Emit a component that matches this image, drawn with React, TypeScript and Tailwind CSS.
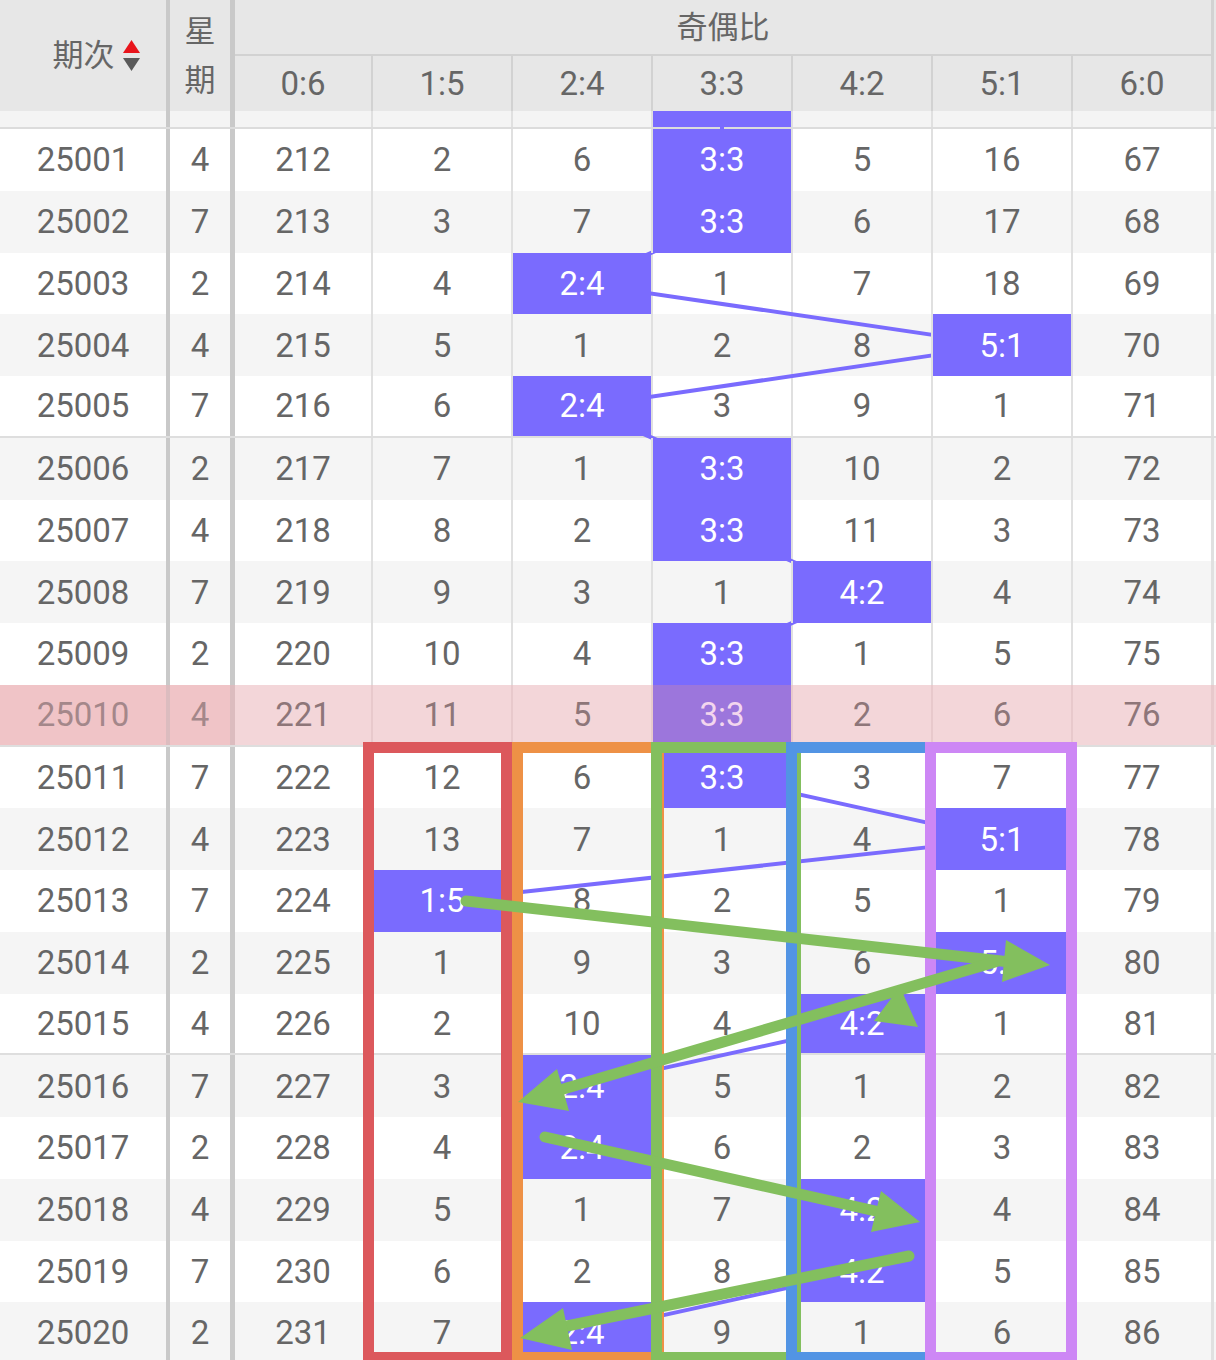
import React from 'react';

const ratios = ['0:6', '1:5', '2:4', '3:3', '4:2', '5:1', '6:0'];

// 0 = hit this draw (highlighted cell), otherwise the miss count
const rows = [
  { id: 25001, week: 4, vals: [212, 2, 6, 0, 5, 16, 67] },
  { id: 25002, week: 7, vals: [213, 3, 7, 0, 6, 17, 68] },
  { id: 25003, week: 2, vals: [214, 4, 0, 1, 7, 18, 69] },
  { id: 25004, week: 4, vals: [215, 5, 1, 2, 8, 0, 70] },
  { id: 25005, week: 7, vals: [216, 6, 0, 3, 9, 1, 71] },
  { id: 25006, week: 2, vals: [217, 7, 1, 0, 10, 2, 72] },
  { id: 25007, week: 4, vals: [218, 8, 2, 0, 11, 3, 73] },
  { id: 25008, week: 7, vals: [219, 9, 3, 1, 0, 4, 74] },
  { id: 25009, week: 2, vals: [220, 10, 4, 0, 1, 5, 75] },
  { id: 25010, week: 4, vals: [221, 11, 5, 0, 2, 6, 76] },
  { id: 25011, week: 7, vals: [222, 12, 6, 0, 3, 7, 77] },
  { id: 25012, week: 4, vals: [223, 13, 7, 1, 4, 0, 78] },
  { id: 25013, week: 7, vals: [224, 0, 8, 2, 5, 1, 79] },
  { id: 25014, week: 2, vals: [225, 1, 9, 3, 6, 0, 80] },
  { id: 25015, week: 4, vals: [226, 2, 10, 4, 0, 1, 81] },
  { id: 25016, week: 7, vals: [227, 3, 0, 5, 1, 2, 82] },
  { id: 25017, week: 2, vals: [228, 4, 0, 6, 2, 3, 83] },
  { id: 25018, week: 4, vals: [229, 5, 1, 7, 0, 4, 84] },
  { id: 25019, week: 7, vals: [230, 6, 2, 8, 0, 5, 85] },
  { id: 25020, week: 2, vals: [231, 7, 0, 9, 1, 6, 86] },
];

const HEADER_H = 111;
const STRIP_H = 18;
const ROW_H = 61.75;

const colX = (j: number) => (j === 0 ? 303 : 442 + 140 * (j - 1));
const rowY = (i: number) => (i < 0 ? HEADER_H + 9 : HEADER_H + STRIP_H + i * ROW_H + ROW_H / 2);

const ratioCol = (j: number, pink = false) => {
  const line = pink ? 'border-[#e8c9cc]' : 'border-[#e0e0e0]';
  if (j === 0) return 'w-[136px]';
  if (j === 6) return `w-[143px] border-l-2 border-r-[3px] ${line}`;
  return `w-[140px] border-l-2 ${line}`;
};

const SortArrows = () => (
  <svg width="17" height="32" viewBox="0 0 17 32" className="ml-2">
    <polygon points="8.5,0 17,13 0,13" fill="#e8141b" />
    <polygon points="0,18 17,18 8.5,31" fill="#5a5a5a" />
  </svg>
);

const Header = () => (
  <div className="flex h-[111px] bg-[#e7e7e7] text-[#666]">
    <div className="w-[170px] border-r-4 border-[#c9c9c9] flex items-center justify-center pl-[26px]">
      <span className="text-[31px] leading-none">期次</span>
      <SortArrows />
    </div>
    <div className="w-[65px] border-r-[5px] border-[#c9c9c9] flex flex-col items-center justify-center text-[31px] leading-[49px]">
      <span>星</span>
      <span>期</span>
    </div>
    <div className="flex flex-col">
      <div className="h-[56px] border-b-2 border-r-[3px] border-[#d2d2d2] flex items-center justify-center text-[31px]">
        奇偶比
      </div>
      <div className="flex h-[55px]">
        {ratios.map((r, j) => (
          <div
            key={r}
            className={`${j === 0 ? 'w-[136px]' : j === 6 ? 'w-[143px] border-l-2 border-r-[3px]' : 'w-[140px] border-l-2'} border-[#d2d2d2] flex items-center justify-center text-[33px]`}
          >
            {r}
          </div>
        ))}
      </div>
    </div>
  </div>
);

// leftover bit of the previous (scrolled) row
const Strip = () => (
  <div className="flex h-[18px] bg-[#f4f4f4] border-b-2 border-[#dcdcdc]">
    <div className="w-[170px] border-r-4 border-[#c9c9c9]" />
    <div className="w-[65px] border-r-[5px] border-[#c9c9c9]" />
    {ratios.map((r, j) => (
      <div key={r} className={`${ratioCol(j)} ${j === 3 ? 'relative z-20 bg-[#7a6bfe]' : ''}`} />
    ))}
  </div>
);

const Row = ({ row, i }: { row: (typeof rows)[number]; i: number }) => {
  const pink = row.id === 25010;
  const bg = pink ? 'bg-[#f3d6d9]' : i % 2 === 0 ? 'bg-white' : 'bg-[#f5f5f5]';
  const groupEnd = i % 5 === 4 ? 'border-b-2 border-[#dedede]' : '';
  const text = pink ? 'text-[#8e7679]' : 'text-[#666]';
  const sep = pink ? 'border-[#dcbcbf]' : 'border-[#c9c9c9]';
  return (
    <div className={`flex h-[61.75px] ${bg} ${groupEnd}`}>
      <div
        className={`w-[170px] border-r-4 ${sep} flex items-center justify-center ${pink ? 'bg-[#f0c4c7] text-[#a4878a]' : text}`}
      >
        {row.id}
      </div>
      <div
        className={`w-[65px] border-r-[5px] ${sep} flex items-center justify-center ${pink ? 'bg-[#f0c4c7] text-[#a4878a]' : text}`}
      >
        {row.week}
      </div>
      {row.vals.map((v, j) =>
        v === 0 ? (
          <div
            key={j}
            className={`${ratioCol(j, pink)} relative z-20 flex items-center justify-center ${pink ? 'bg-[#9c76dc] text-[#f3d6ee]' : 'bg-[#7a6bfe] text-white'}`}
          >
            {ratios[j]}
          </div>
        ) : (
          <div key={j} className={`${ratioCol(j, pink)} flex items-center justify-center ${text}`}>
            {v}
          </div>
        )
      )}
    </div>
  );
};

// purple trend line joining the hit cells
const TrendLine = () => {
  const pts: string[] = [`${colX(3)},${rowY(-1)}`];
  rows.forEach((r, i) => {
    const j = r.vals.findIndex((v) => v === 0);
    pts.push(`${colX(j)},${rowY(i)}`);
  });
  return (
    <svg className="absolute left-0 top-0 z-10 pointer-events-none" width="1216" height="1360">
      <polyline points={pts.join(' ')} fill="none" stroke="#7a6bfe" strokeWidth="4" />
    </svg>
  );
};

const GREEN = '#83bf5e';

const Annotations = () => (
  <>
    <div className="absolute left-[363px] top-[742px] w-[149px] h-[621px] border-[11px] border-[#dc585c] z-30" />
    <div className="absolute left-[512px] top-[742px] w-[152px] h-[621px] border-[11px] border-[#ee9146] z-30" />
    <div className="absolute left-[651px] top-[742px] w-[150px] h-[621px] border-[11px] border-[#83bf5e] z-30" />
    <div className="absolute left-[786px] top-[742px] w-[150px] h-[621px] border-[11px] border-[#5294e4] z-30" />
    <div className="absolute left-[925px] top-[742px] w-[152px] h-[621px] border-[11px] border-[#cd87f5] z-30" />
    <svg className="absolute left-0 top-0 z-40 pointer-events-none" width="1216" height="1360">
      <g stroke={GREEN} strokeWidth="11" strokeLinecap="round" fill="none">
        <line x1="466" y1="901" x2="1010" y2="962" />
        <line x1="995" y1="962" x2="560" y2="1090" />
        <line x1="545" y1="1137" x2="880" y2="1212" />
        <line x1="909" y1="1256" x2="562" y2="1327" />
      </g>
      <g fill={GREEN}>
        <polygon points="1050,965 1006,940 1002,982" />
        <polygon points="900,987 874,1021 918,1027" />
        <polygon points="518,1102 557,1069 569,1111" />
        <polygon points="920,1222 881,1191 871,1232" />
        <polygon points="520,1338 563,1308 572,1350" />
      </g>
    </svg>
  </>
);

export default function App() {
  return (
    <div className="relative w-[1216px] h-[1360px] overflow-hidden bg-white font-['Roboto','Noto_Sans_CJK_SC',sans-serif] text-[33px] leading-none">
      <Header />
      <Strip />
      {rows.map((r, i) => (
        <Row key={r.id} row={r} i={i} />
      ))}
      <TrendLine />
      <Annotations />
    </div>
  );
}
